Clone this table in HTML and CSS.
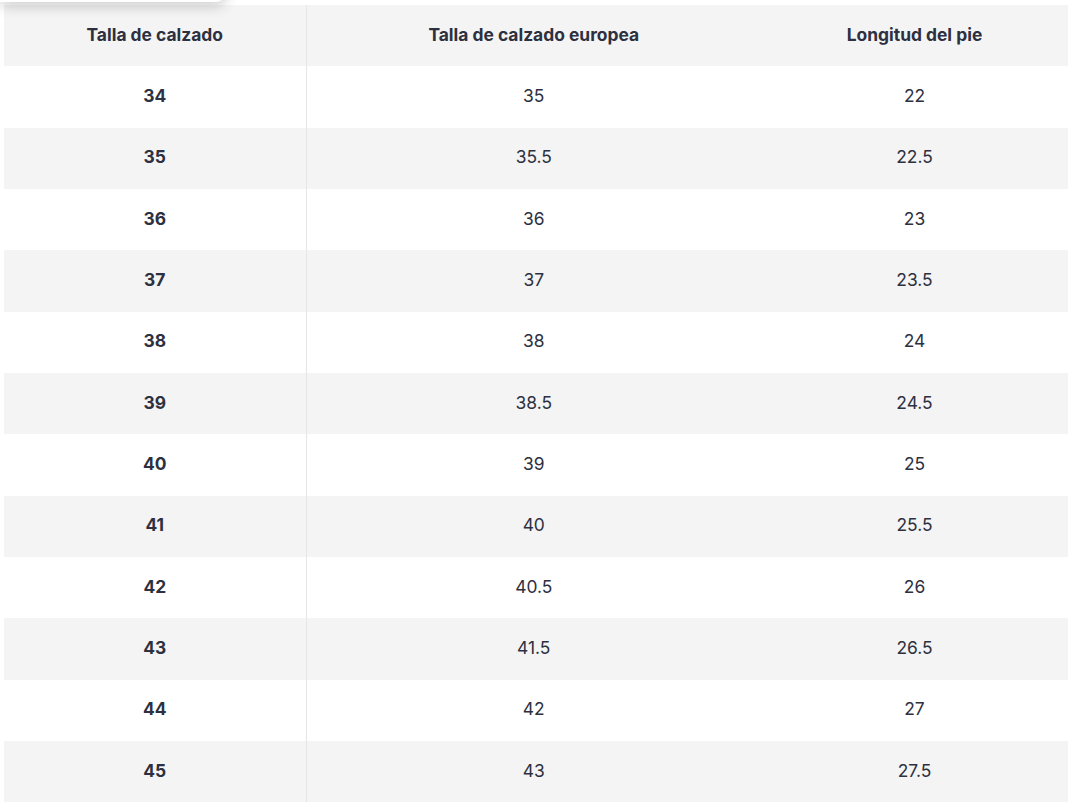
FILE: index.html
```html
<!DOCTYPE html>
<html lang="es">
<head>
<meta charset="utf-8">
<link rel="stylesheet" href="styles.css">
<title>Tallas</title>
</head>
<body>
<div class="sticky-bar"></div>
<div class="wrap">
<table class="sizes">
<colgroup><col class="c1"><col class="c2"><col class="c3"></colgroup>
<thead>
<tr><th>Talla de calzado</th><th>Talla de calzado europea</th><th>Longitud del pie</th></tr>
</thead>
<tbody>
<tr><th>34</th><td>35</td><td>22</td></tr>
<tr><th>35</th><td>35.5</td><td>22.5</td></tr>
<tr><th>36</th><td>36</td><td>23</td></tr>
<tr><th>37</th><td>37</td><td>23.5</td></tr>
<tr><th>38</th><td>38</td><td>24</td></tr>
<tr><th>39</th><td>38.5</td><td>24.5</td></tr>
<tr><th>40</th><td>39</td><td>25</td></tr>
<tr><th>41</th><td>40</td><td>25.5</td></tr>
<tr><th>42</th><td>40.5</td><td>26</td></tr>
<tr><th>43</th><td>41.5</td><td>26.5</td></tr>
<tr><th>44</th><td>42</td><td>27</td></tr>
<tr><th>45</th><td>43</td><td>27.5</td></tr>
</tbody>
</table>
</div>
</body>
</html>
```
FILE: styles.css
```css
html, body {
  margin: 0;
  padding: 0;
  background: #ffffff;
}
body {
  font-family: Inter, "Noto Sans", sans-serif;
  color: #2d3040;
  overflow: hidden;
}
.sticky-bar {
  position: absolute;
  left: 0;
  top: -40px;
  width: 226px;
  height: 42px;
  background: #ffffff;
  border-bottom-right-radius: 10px;
  box-shadow: 0 4px 14px rgba(0, 0, 0, 0.2);
  z-index: 2;
}
.wrap {
  padding: 5px 12px 0 4px;
}
.sizes {
  width: 1064px;
  border-collapse: collapse;
  table-layout: fixed;
}
.c1 { width: 302px; }
.c2 { width: 455px; }
.c3 { width: 307px; }
.sizes th,
.sizes td {
  height: 59.33px;
  padding: 0 0 2px;
  text-align: center;
  vertical-align: middle;
  font-size: 17.4px;
  line-height: 20px;
}
.sizes th {
  font-weight: 700;
}
.sizes td {
  font-weight: 400;
}
.sizes tr > :first-child {
  border-right: 1px solid #e6e6e6;
}
.sizes thead tr,
.sizes tbody tr:nth-child(even) {
  background: #f4f4f4;
}
.sizes tbody tr:nth-child(odd) {
  background: #ffffff;
}
```
